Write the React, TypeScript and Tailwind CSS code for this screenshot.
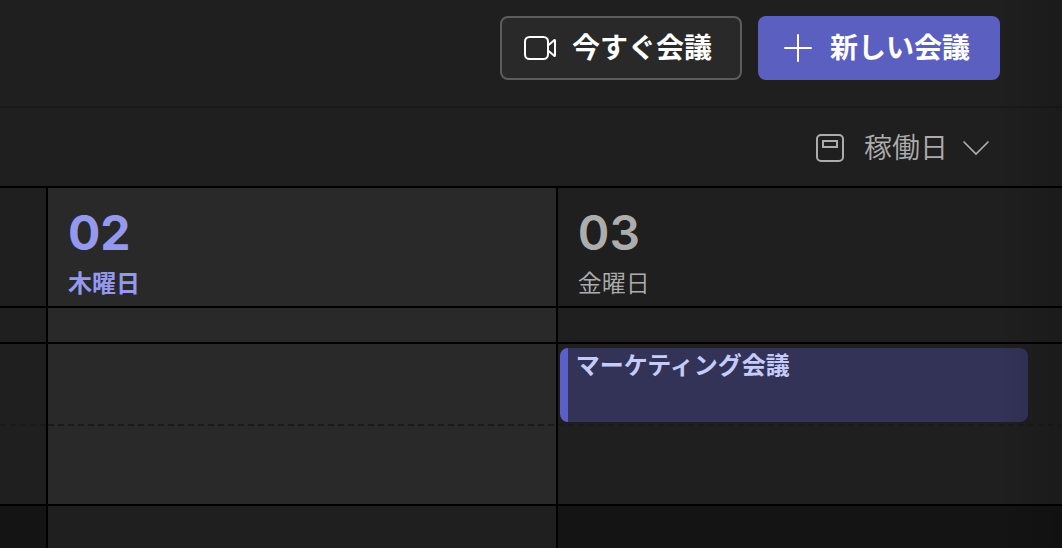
import { clsx } from 'clsx';

type IDay = {
  date: string;
  weekday: string;
  today?: boolean;
  event?: string;
};

const days: IDay[] = [
  { date: '02', weekday: '木曜日', today: true },
  { date: '03', weekday: '金曜日', event: 'マーケティング会議' },
];

const VideoIcon = () => (
  <svg
    className="h-8 w-8"
    viewBox="0 0 32 32"
    fill="none"
    stroke="currentColor"
    strokeWidth="2"
    strokeLinejoin="round"
  >
    <rect x="1" y="5" width="23" height="22" rx="4.5" />
    <path d="M24 13.5 30.2 8.2Q31 7.7 31 8.7V23.3Q31 24.3 30.2 23.8L24 18.5" />
  </svg>
);

const PlusIcon = () => (
  <svg
    className="h-8 w-8"
    viewBox="0 0 32 32"
    stroke="currentColor"
    strokeWidth="2"
    strokeLinecap="round"
  >
    <path d="M16 3v26M3 16h26" />
  </svg>
);

const WorkWeekIcon = () => (
  <svg
    className="h-8 w-8"
    viewBox="0 0 32 32"
    fill="none"
    stroke="currentColor"
    strokeWidth="2"
  >
    <rect x="3" y="3" width="26" height="26" rx="4" />
    <rect x="9" y="9" width="14" height="6" />
  </svg>
);

const ChevronIcon = () => (
  <svg
    className="h-8 w-8"
    viewBox="0 0 32 32"
    fill="none"
    stroke="currentColor"
    strokeWidth="1.7"
    strokeLinecap="round"
  >
    <path d="m4 10 12 12 12-12" />
  </svg>
);

const Header = () => (
  <header className="flex h-[108px] justify-end gap-4 border-b-2 border-[#1a1a1a] pt-4 pr-[62px]">
    <button
      type="button"
      className="flex h-16 w-[242px] items-center gap-4 rounded-lg border-2 border-[#5c5c5c] bg-[#292929] pl-[22px] text-[28px] leading-8 font-bold whitespace-nowrap text-white"
    >
      <VideoIcon />
      <span className="pt-0.5">今すぐ会議</span>
    </button>
    <button
      type="button"
      className="flex h-16 w-[242px] items-center gap-4 rounded-lg bg-[#5b5fc0] pl-6 text-[28px] leading-8 font-bold whitespace-nowrap text-white"
    >
      <PlusIcon />
      <span className="pt-0.5">新しい会議</span>
    </button>
  </header>
);

const Toolbar = () => (
  <div className="flex h-[78px] items-center justify-end pt-0.5 pr-[70px]">
    <button
      type="button"
      className="flex items-center gap-[18px] text-[28px] leading-8 font-[350] whitespace-nowrap text-[#adadad]"
    >
      <WorkWeekIcon />
      <span className="flex items-center gap-3">
        <span className="pt-0.5">稼働日</span>
        <ChevronIcon />
      </span>
    </button>
  </div>
);

const HalfHour = () => (
  <div className="h-20">
    <div className="h-0.5 bg-[repeating-linear-gradient(90deg,#1a1a1a_0_6px,transparent_6px_10px)]" />
  </div>
);

const Calendar = () => (
  <table className="w-full table-fixed border-separate border-spacing-0 border-t-2 border-black">
    <colgroup>
      <col className="w-12" />
      <col className="w-[48%]" />
      <col />
    </colgroup>
    <thead>
      <tr className="h-[120px]">
        <td className="border-r-2 border-b-2 border-black" />
        {days.map((day) => (
          <th
            key={day.date}
            scope="col"
            className={clsx(
              'border-b-2 border-black px-5 pt-5 text-left align-top last:border-r-0',
              day.today
                ? 'border-r-2 bg-[#292929] text-[#9499ee]'
                : 'text-[#adadad]',
            )}
          >
            <div
              className={clsx(
                "font-['Inter',sans-serif] text-5xl leading-[50px]",
                day.today ? 'font-bold' : 'font-semibold',
              )}
            >
              {day.date}
            </div>
            <div
              className={clsx(
                'mt-2.5 text-2xl leading-8',
                day.today ? 'font-bold' : 'font-[350]',
              )}
            >
              {day.weekday}
            </div>
          </th>
        ))}
      </tr>
    </thead>
    <tbody>
      {/* All day */}
      <tr className="h-9">
        <td className="border-r-2 border-b-2 border-black" />
        {days.map((day) => (
          <td
            key={day.date}
            className={clsx(
              'border-b-2 border-black',
              day.today && 'border-r-2 bg-[#292929]',
            )}
          />
        ))}
      </tr>

      {/* Working hours */}
      <tr>
        <td className="border-r-2 border-b-2 border-black p-0">
          <div className="h-20" />
          <HalfHour />
        </td>
        {days.map((day) => (
          <td
            key={day.date}
            className={clsx(
              'border-b-2 border-black p-0',
              day.today && 'border-r-2 bg-[#292929]',
            )}
          >
            <div className="h-20 pt-1 pr-[34px] pl-0.5">
              {day.event && (
                <button
                  type="button"
                  className="flex h-[74px] w-full items-start overflow-hidden rounded-lg border-l-8 border-[#5b5fc7] bg-[#333357] pl-2 text-left text-2xl leading-9 font-bold text-[#c5cbfa]"
                >
                  {day.event}
                </button>
              )}
            </div>
            <HalfHour />
          </td>
        ))}
      </tr>

      {/* After hours */}
      <tr className="h-[42px]">
        <td className="border-r-2 border-black bg-[#141414]" />
        {days.map((day) => (
          <td
            key={day.date}
            className={clsx(
              'border-black',
              day.today ? 'border-r-2 bg-[#1f1f1f]' : 'bg-[#141414]',
            )}
          />
        ))}
      </tr>
    </tbody>
  </table>
);

const App = () => (
  <main className="relative min-h-screen overflow-hidden bg-[#1f1f1f] font-['Liberation_Sans','Noto_Sans_CJK_JP',sans-serif]">
    <Header />
    <Toolbar />
    <Calendar />
    {/* Edge shade */}
    <div className="pointer-events-none absolute inset-y-0 right-0 w-16 bg-linear-to-r from-transparent to-black/15" />
  </main>
);

export default App;
